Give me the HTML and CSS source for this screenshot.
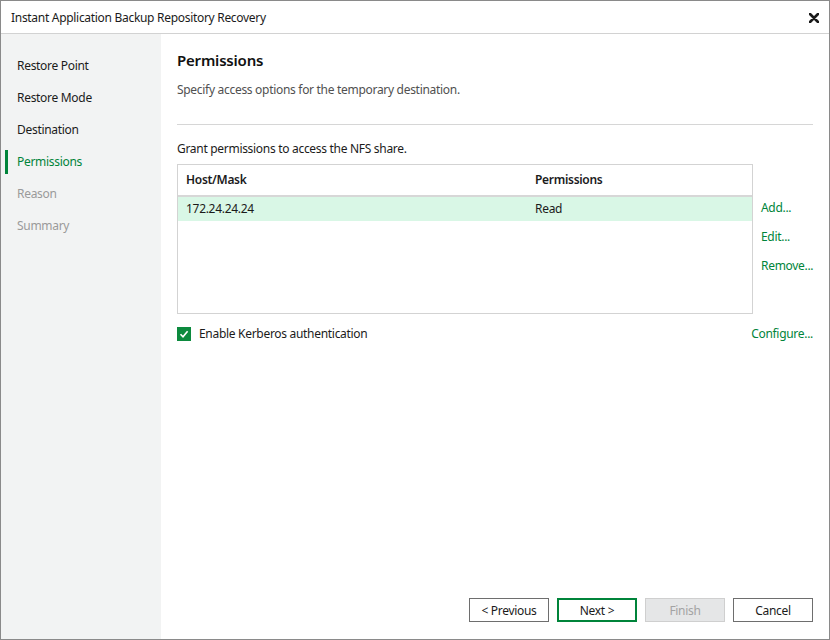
FILE: index.html
```html
<!DOCTYPE html>
<html lang="en">
  <head>
    <meta charset="UTF-8" />
    <title>Instant Application Backup Repository Recovery</title>
    <link rel="stylesheet" href="styles.css">
  </head>
  <body>
    <div class="window">
      <div class="titlebar">
        <span class="title">Instant Application Backup Repository Recovery</span>
        <svg class="close" width="10" height="10" viewBox="0 0 10 10">
          <path d="M1 1 L9 9 M9 1 L1 9" stroke="#1a1a1a" stroke-width="2.6" stroke-linecap="round" />
        </svg>
      </div>
      <div class="main">
        <!-- шаги мастера -->
        <ul class="steps">
          <li>Restore Point</li>
          <li>Restore Mode</li>
          <li>Destination</li>
          <li class="current">Permissions</li>
          <li class="disabled">Reason</li>
          <li class="disabled">Summary</li>
        </ul>
        <div class="content">
          <h1>Permissions</h1>
          <p class="subtitle">Specify access options for the temporary destination.</p>
          <div class="separator"></div>
          <p class="label">Grant permissions to access the NFS share.</p>
          <div class="grid-row">
            <div class="grid">
              <div class="grid-head">
                <span class="col-host">Host/Mask</span>
                <span class="col-perm">Permissions</span>
              </div>
              <div class="grid-line selected">
                <span class="col-host">172.24.24.24</span>
                <span class="col-perm">Read</span>
              </div>
            </div>
            <div class="actions">
              <a>Add...</a>
              <a>Edit...</a>
              <a>Remove...</a>
            </div>
          </div>
          <div class="check-row">
            <span class="checkbox">
              <svg width="14" height="14" viewBox="0 0 14 14">
                <path d="M3.5 7.2 L6 9.8 L10.6 4.2" fill="none" stroke="#fff" stroke-width="1.6" />
              </svg>
            </span>
            <span class="check-label">Enable Kerberos authentication</span>
            <a class="configure">Configure...</a>
          </div>
          <div class="footer">
            <button>&lt; Previous</button>
            <button class="primary">Next &gt;</button>
            <button class="disabled">Finish</button>
            <button>Cancel</button>
          </div>
        </div>
      </div>
    </div>
  </body>
</html>
```

FILE: styles.css
```css
* {
  margin: 0;
  padding: 0;
  box-sizing: border-box;
}
body {
  font-family: "Noto Sans", "Open Sans", sans-serif;
  font-size: 12px;
  letter-spacing: -0.3px;
  color: #1b1b1b;
  background: #fff;
}
.window {
  width: 830px;
  height: 640px;
  border: 1px solid #8a8a8a;
  display: flex;
  flex-direction: column;
}
.titlebar {
  height: 33px;
  border-bottom: 1px solid #d2d2d2;
  display: flex;
  align-items: center;
  justify-content: space-between;
  padding: 0 10px 0 10px;
}
.title {
  line-height: 16px;
  margin-top: 1px;
}
.close {
  margin-top: 1px;
}
.main {
  flex: 1;
  display: flex;
}
/* левая колонка */
.steps {
  width: 160px;
  flex-shrink: 0;
  background-color: #f2f3f3;
  list-style: none;
  padding-top: 16px;
}
.steps > li {
  height: 32px;
  line-height: 32px;
  padding-left: 16px;
  position: relative;
}
.steps > li.current {
  color: #00843a;
}
.steps > li.current::before {
  content: "";
  position: absolute;
  left: 4px;
  top: 4px;
  width: 3px;
  height: 24px;
  background-color: #00843a;
}
.steps > li.disabled {
  color: #9a9a9a;
}
/* правая часть */
.content {
  flex: 1;
  min-width: 0;
  padding: 16px 16px 17px 16px;
  display: flex;
  flex-direction: column;
}
h1 {
  font-size: 15px;
  font-weight: 600;
  letter-spacing: -0.2px;
  line-height: 20px;
  color: #111;
}
.subtitle {
  margin-top: 12px;
  line-height: 16px;
  color: #505050;
}
.separator {
  margin-top: 26px;
  height: 1px;
  background-color: #d6d6d6;
}
.label {
  margin-top: 16px;
  line-height: 16px;
}
.grid-row {
  margin-top: 7px;
  display: flex;
}
.grid {
  width: 576px;
  flex-shrink: 0;
  height: 150px;
  border: 1px solid #d3d3d3;
}
.grid-head,
.grid-line {
  display: flex;
}
.grid-head {
  height: 32px;
  line-height: 30px;
  border-bottom: 2px solid #d7d7d7;
  font-weight: 600;
}
.grid-line {
  height: 24px;
  line-height: 23px;
}
.grid-line.selected {
  background-color: #d9f7e6;
}
.col-host {
  width: 357px;
  padding-left: 8px;
}
.col-perm {
  flex: 1;
}
.actions {
  flex: 1;
  padding-top: 29px;
  padding-left: 8px;
  display: flex;
  flex-direction: column;
}
.actions > a,
.configure {
  color: #00843a;
  cursor: pointer;
}
.actions > a {
  line-height: 29px;
}
.check-row {
  margin-top: 12px;
  display: flex;
  align-items: center;
  line-height: 16px;
}
.checkbox {
  width: 14px;
  height: 14px;
  background-color: #0c8a3e;
  display: flex;
}
.check-label {
  margin-left: 8px;
  flex: 1;
}
.footer {
  margin-top: auto;
  display: flex;
  justify-content: flex-end;
  gap: 8px;
}
button {
  width: 80px;
  height: 24px;
  font-family: inherit;
  font-size: 12px;
  letter-spacing: -0.3px;
  color: #1b1b1b;
  background-color: #fff;
  border: 1px solid #6e6e6e;
}
button.primary {
  border: 2px solid #00843a;
}
button.disabled {
  background-color: #e5e6e7;
  border-color: #cfcfcf;
  color: #a3a3a3;
}
```
